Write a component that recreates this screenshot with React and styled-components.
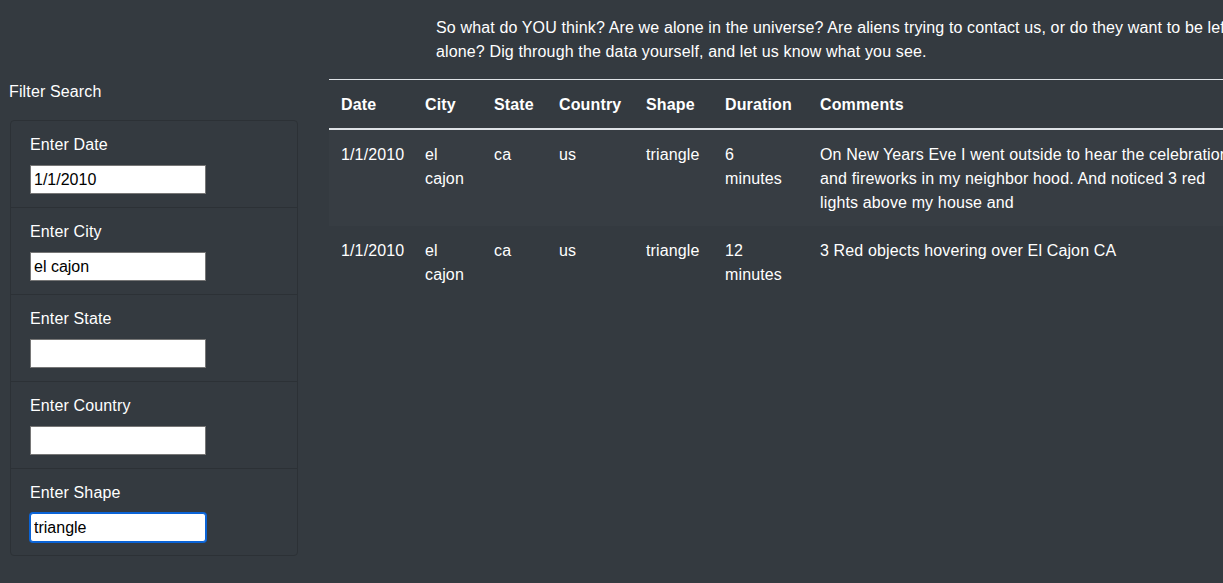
import React, { useEffect, useRef } from 'react'
import styled, { createGlobalStyle } from 'styled-components'

const sightings = [
  {
    date: '1/1/2010',
    city: 'el cajon',
    state: 'ca',
    country: 'us',
    shape: 'triangle',
    duration: '6 minutes',
    comments:
      'On New Years Eve I went outside to hear the celebrations and fireworks in my neighbor hood. And noticed 3 red lights above my house and'
  },
  {
    date: '1/1/2010',
    city: 'el cajon',
    state: 'ca',
    country: 'us',
    shape: 'triangle',
    duration: '12 minutes',
    comments: '3 Red objects hovering over El Cajon CA'
  }
]

const filters = [
  { id: 'datetime', label: 'Enter Date', value: '1/1/2010' },
  { id: 'city', label: 'Enter City', value: 'el cajon' },
  { id: 'state', label: 'Enter State', value: '' },
  { id: 'country', label: 'Enter Country', value: '' },
  { id: 'shape', label: 'Enter Shape', value: 'triangle', focused: true }
]

// narrow columns wrap their text, like the auto-sized table did
const columns = [
  { key: 'date', title: 'Date', width: 84 },
  { key: 'city', title: 'City', width: 69 },
  { key: 'state', title: 'State', width: 65 },
  { key: 'country', title: 'Country', width: 87 },
  { key: 'shape', title: 'Shape', width: 79 },
  { key: 'duration', title: 'Duration', width: 95, narrow: true },
  { key: 'comments', title: 'Comments', width: 446 }
]

export default function App() {
  const shapeRef = useRef(null)

  // leave the caret at the end of the shape filter, like the user just typed it
  useEffect(() => {
    const el = shapeRef.current
    if (!el) return
    el.focus()
    el.setSelectionRange(el.value.length, el.value.length)
  }, [])

  return (
    <>
      <GlobalStyle />
      <Page>
        <Intro>
          So what do YOU think? Are we alone in the universe? Are aliens trying
          to contact us, or do they want to be left alone? Dig through the data
          yourself, and let us know what you see.
        </Intro>
        <Content>
          <Sidebar>
            <SidebarTitle>Filter Search</SidebarTitle>
            <FilterList>
              {filters.map((f) => (
                <FilterItem key={f.id}>
                  <Label htmlFor={f.id}>{f.label}</Label>
                  <Input
                    id={f.id}
                    type="text"
                    defaultValue={f.value}
                    ref={f.focused ? shapeRef : undefined}
                    $focused={f.focused}
                  />
                </FilterItem>
              ))}
            </FilterList>
          </Sidebar>
          <Table>
            <colgroup>
              {columns.map((c) => (
                <col key={c.key} style={{ width: c.width }} />
              ))}
            </colgroup>
            <thead>
              <tr>
                {columns.map((c) => (
                  <Th key={c.key}>{c.title}</Th>
                ))}
              </tr>
            </thead>
            <tbody>
              {sightings.map((s, i) => (
                <Row key={i} $striped={i % 2 === 0}>
                  {columns.map((c) => (
                    <Td key={c.key} $narrow={c.narrow}>
                      {s[c.key]}
                    </Td>
                  ))}
                </Row>
              ))}
            </tbody>
          </Table>
        </Content>
      </Page>
    </>
  )
}

const GlobalStyle = createGlobalStyle`
  html, body {
    margin: 0;
    background: #343a40;
    overflow: hidden;
  }
  body {
    font-family: "Liberation Sans", Arial, sans-serif;
    font-size: 16px;
    line-height: 24px;
    letter-spacing: 0.14px;
    color: #fff;
  }
`

const Page = styled.div`
  width: 1400px;
  min-height: 583px;
  box-sizing: border-box;
  padding-top: 16px;
`

const Intro = styled.p`
  margin: 0 0 15px 436px;
  width: 800px;
`

const Content = styled.div`
  display: flex;
  align-items: flex-start;
  gap: 31px;
  padding-left: 10px;
`

const Sidebar = styled.div`
  width: 288px;
  flex: none;
`

const SidebarTitle = styled.div`
  margin-left: -1px;
  padding-top: 1px;
  margin-bottom: 16px;
`

const FilterList = styled.ul`
  list-style: none;
  margin: 0;
  padding: 0;
  border: 1px solid #2c3136;
  border-radius: 4px;
`

const FilterItem = styled.li`
  display: flex;
  flex-direction: column;
  align-items: flex-start;
  padding: 12px 20px 13px 19px;
  & + & {
    border-top: 1px solid #2c3136;
  }
`

const Label = styled.label`
  margin-bottom: 8px;
`

const Input = styled.input`
  box-sizing: border-box;
  width: 176px;
  height: 29px;
  margin: 0;
  padding: 1px 3px;
  font-family: "Liberation Sans", Arial, sans-serif;
  font-size: 16px;
  color: #000;
  caret-color: #000;
  background: #fff;
  border: 1px solid #767676;
  border-radius: 0;
  outline: none;
  ${(p) =>
    p.$focused &&
    `
    border-color: #0a63d6;
    border-radius: 3px;
    box-shadow: 0 0 0 1px #0a63d6;
  `}
`

const Table = styled.table`
  table-layout: fixed;
  width: 925px;
  flex: none;
  border-collapse: collapse;
  border-top: 1px solid #dee2e6;
`

const Th = styled.th`
  padding: 13px 12px 11px;
  text-align: left;
  font-weight: bold;
  vertical-align: bottom;
  border-bottom: 2px solid #dee2e6;
`

const Row = styled.tr`
  background: ${(p) => (p.$striped ? 'rgba(255, 255, 255, 0.02)' : 'transparent')};
  & + & td {
    border-top: 1px solid #dee2e6;
  }
`

const Td = styled.td`
  padding: 13px ${(p) => (p.$narrow ? '16px' : '12px')} 11px 12px;
  vertical-align: top;
`
